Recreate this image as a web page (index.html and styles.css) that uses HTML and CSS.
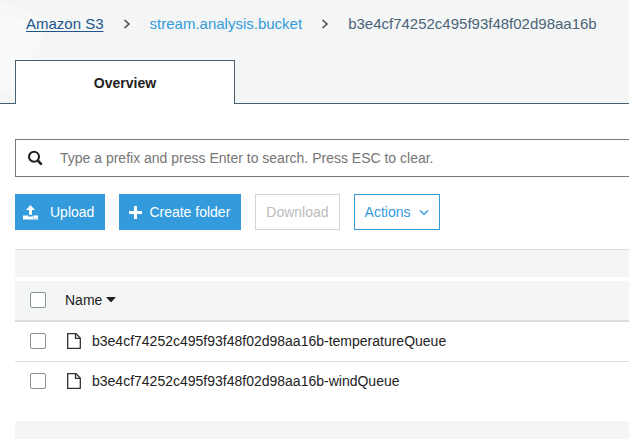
FILE: index.html
```html
<!DOCTYPE html>
<html lang="en">
<head>
<meta charset="utf-8">
<title>Amazon S3</title>
<link rel="stylesheet" href="styles.css">
</head>
<body>
<header class="header">
  <svg class="watermark" width="48" height="103" viewBox="0 0 48 103" aria-hidden="true">
    <path d="M0 5C20 6 40 13 43 24C43 38 40 50 38 66V103H20L0 90Z" fill="#f7f9f8"/>
    <path d="M0 17C12 17 28 20 35 26L30 60H15V92L0 81Z" fill="#f9fbfa"/>
  </svg>
  <nav class="breadcrumb" aria-label="Breadcrumb">
    <a class="crumb crumb-root" href="#">Amazon S3</a>
    <svg class="separator" width="8" height="10" viewBox="0 0 8 10" aria-hidden="true"><path d="M1.5 1L6 5L1.5 9"/></svg>
    <a class="crumb" href="#">stream.analysis.bucket</a>
    <svg class="separator" width="8" height="10" viewBox="0 0 8 10" aria-hidden="true"><path d="M1.5 1L6 5L1.5 9"/></svg>
    <span class="crumb-current">b3e4cf74252c495f93f48f02d98aa16b</span>
  </nav>
  <div class="tabs">
    <button class="tab" type="button">Overview</button>
  </div>
</header>
<main class="content">
  <label class="search">
    <svg width="16" height="16" viewBox="0 0 16 16" aria-hidden="true"><circle cx="7" cy="6.7" r="5" fill="none" stroke="#222" stroke-width="2.1"/><path d="M10.7 10.5L14 13.8" stroke="#222" stroke-width="2.6" stroke-linecap="round"/></svg>
    <input type="text" aria-label="Search by prefix" placeholder="Type a prefix and press Enter to search. Press ESC to clear.">
  </label>
  <div class="toolbar">
    <button class="btn primary upload" type="button">
      <svg width="15" height="15" viewBox="0 0 15 15" aria-hidden="true"><path fill="#fff" d="M7.5 0L12 5H9V9.7H6V5H3ZM0 10.6H5V11.4H10V10.6H15V14.6H0Z"/><path fill="#339bdb" d="M10 12.6H11V13.6H10ZM12.5 12.6H13.5V13.6H12.5Z"/></svg>
      Upload
    </button>
    <button class="btn primary" type="button">
      <svg width="13" height="13" viewBox="0 0 13 13" aria-hidden="true"><path fill="#fff" d="M5 0H8V5H13V8H8V13H5V8H0V5H5Z"/></svg>
      Create folder
    </button>
    <button class="btn" type="button" disabled>Download</button>
    <button class="btn outline" type="button">
      Actions
      <svg width="10" height="7" viewBox="0 0 10 7" aria-hidden="true"><path d="M1 1.5L5 5.2L9 1.5" fill="none" stroke="#339bdb" stroke-width="1.4"/></svg>
    </button>
  </div>
  <div class="band band-top"></div>
  <table class="objects">
    <thead>
      <tr>
        <th class="select"><input type="checkbox" aria-label="Select all"></th>
        <th>Name <svg class="sort" width="10" height="6" viewBox="0 0 10 6" aria-hidden="true"><path d="M0 0H10L5 5.5Z" fill="#222"/></svg></th>
      </tr>
    </thead>
    <tbody>
      <tr>
        <td class="select"><input type="checkbox" id="temperature"></td>
        <td><label class="object" for="temperature"><svg width="14" height="16" viewBox="0 0 14 16" aria-hidden="true"><path d="M.7 .7H9L13.3 5V15.3H.7ZM8.5 .7V5.3H13.3" fill="none" stroke="#333" stroke-width="1.3"/></svg>b3e4cf74252c495f93f48f02d98aa16b-temperatureQueue</label></td>
      </tr>
      <tr>
        <td class="select"><input type="checkbox" id="wind"></td>
        <td><label class="object" for="wind"><svg width="14" height="16" viewBox="0 0 14 16" aria-hidden="true"><path d="M.7 .7H9L13.3 5V15.3H.7ZM8.5 .7V5.3H13.3" fill="none" stroke="#333" stroke-width="1.3"/></svg>b3e4cf74252c495f93f48f02d98aa16b-windQueue</label></td>
      </tr>
    </tbody>
  </table>
  <div class="band band-bottom"></div>
</main>
</body>
</html>
```
FILE: styles.css
```css
* {
  box-sizing: border-box;
}

body {
  margin: 0;
  overflow: hidden;
  background: #fff;
  color: #222;
  font: 14px/20px "Liberation Sans", Arial, sans-serif;
}

button,
input {
  font: inherit;
}

svg {
  flex: none;
}

.header {
  position: relative;
  background: #f4f6f6;
}

.watermark {
  position: absolute;
  top: 0;
  left: 0;
}

.breadcrumb {
  position: relative;
  display: flex;
  align-items: center;
  gap: 19px;
  padding: 14px 0 26px 26px;
  font-size: 15px;
  white-space: nowrap;
}

.crumb {
  color: #339bdb;
  text-decoration: none;
}

.crumb-root {
  color: #20558a;
  text-decoration: underline;
  text-underline-offset: 2px;
}

.crumb-current {
  color: #4b6478;
}

.separator path {
  fill: none;
  stroke: #444;
  stroke-width: 1.5;
}

.tabs {
  position: relative;
  display: flex;
  padding-left: 15px;
  border-bottom: 1px solid #46606f;
}

.tab {
  width: 220px;
  height: 44px;
  margin-bottom: -1px;
  padding: 0;
  border: 1px solid #46606f;
  border-bottom: 0;
  background: #fff;
  color: #222;
  font-weight: bold;
}

.content {
  padding: 35px 0 0 15px;
}

.search {
  display: flex;
  align-items: center;
  gap: 17px;
  height: 38px;
  padding-left: 11px;
  border: 1px solid #777;
  border-right: 0;
}

.search input {
  flex: 1;
  min-width: 0;
  padding: 0;
  border: 0;
  outline: 0;
  background: none;
}

.search input::placeholder {
  color: #757575;
  opacity: 1;
}

.toolbar {
  display: flex;
  gap: 14px;
  padding: 17px 0 19px;
}

.btn {
  display: flex;
  align-items: center;
  gap: 8px;
  height: 36px;
  padding: 0 10px;
  border: 1px solid #d5d5d5;
  background: #fff;
  color: #bbb;
  white-space: nowrap;
}

.btn.primary {
  padding: 0 10px 0 9px;
  gap: 7px;
  border-color: #339bdb;
  background: #339bdb;
  color: #fff;
}

.btn.upload {
  gap: 12px;
  padding-left: 7px;
}

.btn.outline {
  border-color: #339bdb;
  color: #339bdb;
}

.band {
  height: 28px;
  background: #f4f6f6;
}

.band-top {
  border-top: 1px solid #ddd;
  margin-bottom: 4px;
}

.band-bottom {
  margin-top: 19px;
}

.objects {
  width: 100%;
  border-collapse: separate;
  border-spacing: 0;
}

.objects th,
.objects td {
  height: 40px;
  padding: 11px 0 0;
  line-height: 16px;
  text-align: left;
  vertical-align: top;
  font-weight: normal;
}

.objects th {
  height: 41px;
  border-bottom: 2px solid #ddd;
  background: #f4f6f6;
}

.objects tr:first-child td {
  border-bottom: 1px solid #ddd;
}

.objects .select {
  width: 50px;
  padding-left: 15px;
}

.objects input {
  appearance: none;
  display: block;
  width: 16px;
  height: 16px;
  margin: 0;
  border: 1px solid #879596;
  border-radius: 2px;
  background: #fff;
}

.sort {
  vertical-align: 2px;
}

.object {
  display: flex;
  align-items: center;
  gap: 11px;
  padding-left: 2px;
  white-space: nowrap;
}
```
